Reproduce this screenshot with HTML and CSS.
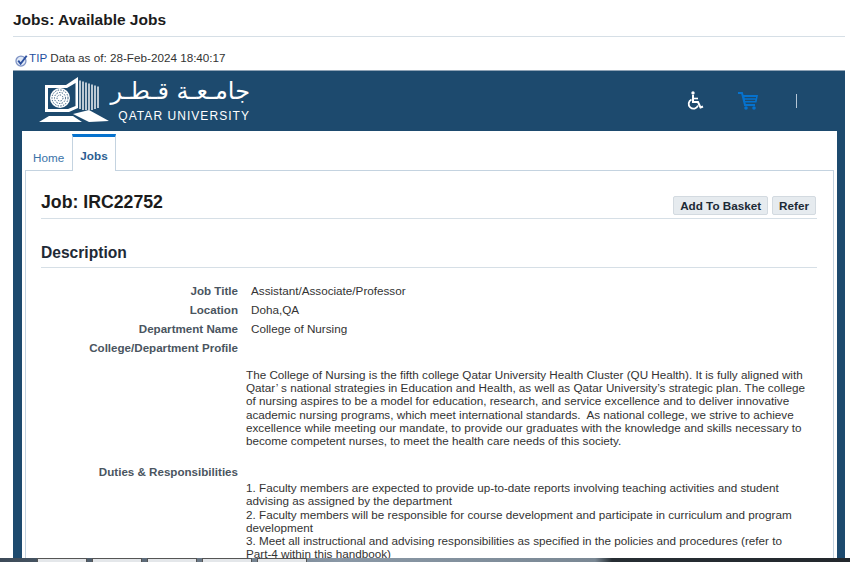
FILE: index.html
```html
<!DOCTYPE html>
<html lang="en">
<head>
<meta charset="utf-8">
<title>Jobs: Available Jobs</title>
<link rel="stylesheet" href="styles.css">
</head>
<body>
<div class="page">
  <h1 class="page-title">Jobs: Available Jobs</h1>
  <div class="tip">
    <svg class="tip-icon" width="13" height="13" viewBox="0 0 12 12"><circle cx="5.500" cy="6.500" r="4.600" fill="#dfe8f6" stroke="#7f93c4" stroke-width="1.200"/><path d="M3 6.200 5.200 9 10.800 1.600" fill="none" stroke="#2c4f9e" stroke-width="1.800"/></svg>
    <span class="tip-label">TIP</span> <span>Data as of: 28-Feb-2024 18:40:17</span>
  </div>
  <div class="shell">
    <header class="brand">
      <div class="logo">
        <svg class="logo-mark" width="70" height="46" viewBox="0 0 70 46">
          <path d="M6 8H27L39 0V31L30 35H6ZM9 11V32H29L36.500 29V6L28 11Z" fill="#fff" fill-rule="evenodd"/>
          <circle cx="21" cy="21" r="10" fill="#fff"/>
          <g fill="none" stroke="#1d4a6e" stroke-width=".9" stroke-dasharray="1.400 1.300"><circle cx="21" cy="21" r="8"/><circle cx="21" cy="21" r="5.500"/><circle cx="21" cy="21" r="3"/></g>
          <path d="M41 3.500V32M44 4.500V33M47 5.500V33M50 6.500V33M53 7.500V33M56 8.500V32M59 9.500V31" stroke="#fff" stroke-width="1.400"/>
          <path d="M0 45 10 39H34L43 45Z M34 37 50 33 70 44 50 45Z" fill="#fff"/>
        </svg>
        <div class="logo-text">
          <span class="logo-ar" lang="ar" dir="rtl">جامـعـة قـطـر</span>
          <span class="logo-en">QATAR UNIVERSITY</span>
        </div>
      </div>
      <div class="brand-tools">
        <svg class="tool-a11y" width="18" height="20" viewBox="0 0 18 20"><circle cx="6" cy="2" r="1.700" fill="#fff"/><path d="M6 4V11H11L13.500 16.500 16 15.500" fill="none" stroke="#fff" stroke-width="2"/><path d="M6.500 7.500H11" stroke="#fff" stroke-width="1.600"/><path d="M4.500 8.500A4.800 4.800 0 1 0 11 14.500" fill="none" stroke="#fff" stroke-width="1.800"/></svg>
        <svg class="tool-cart" width="21" height="18" viewBox="0 0 21 18"><path d="M0 1H4L7 13H17" fill="none" stroke="#0572ce" stroke-width="2"/><path d="M4.500 3H20L18.500 10.500H6.300ZM6.500 5V6.300H18V5ZM7 7.800V9H17.200V7.800Z" fill="#0572ce" fill-rule="evenodd"/><circle cx="8" cy="16" r="1.800" fill="#0572ce"/><circle cx="16" cy="16" r="1.800" fill="#0572ce"/></svg>
        <span class="tool-sep"></span>
      </div>
    </header>
    <main class="panel">
      <nav class="tabs">
        <a class="tab">Home</a>
        <a class="tab tab-active">Jobs</a>
      </nav>
      <section class="content">
        <div class="job-head">
          <h2 class="job-title">Job: IRC22752</h2>
          <div class="actions">
            <button class="btn">Add To Basket</button>
            <button class="btn">Refer</button>
          </div>
        </div>
        <h3 class="section-title">Description</h3>
        <div class="fields">
          <div class="label">Job Title</div><div class="value">Assistant/Associate/Professor</div>
          <div class="label">Location</div><div class="value">Doha,QA</div>
          <div class="label">Department Name</div><div class="value">College of Nursing</div>
          <div class="label">College/Department Profile</div><div class="value"></div>
        </div>
        <div class="long-text profile">The College of Nursing is the fifth college Qatar University Health Cluster (QU Health). It is fully aligned with<br>Qatar’ s national strategies in Education and Health, as well as Qatar University’s strategic plan. The college<br>of nursing aspires to be a model for education, research, and service excellence and to deliver innovative<br>academic nursing programs, which meet international standards.&nbsp; As national college, we strive to achieve<br>excellence while meeting our mandate, to provide our graduates with the knowledge and skills necessary to<br>become competent nurses, to meet the health care needs of this society.</div>
        <div class="fields duties-row">
          <div class="label">Duties &amp; Responsibilities</div><div class="value"></div>
        </div>
        <div class="long-text duties">1. Faculty members are expected to provide up-to-date reports involving teaching activities and student<br>advising as assigned by the department<br>2. Faculty members will be responsible for course development and participate in curriculum and program<br>development<br>3. Meet all instructional and advising responsibilities as specified in the policies and procedures (refer to<br>Part-4 within this handbook)</div>
      </section>
    </main>
  </div>
</div>
<div class="taskbar">
  <span class="task-item"></span><span class="task-item"></span><span class="task-item"></span><span class="task-item"></span><span class="task-item"></span>
</div>
</body>
</html>
```
FILE: styles.css
```css
* { box-sizing: border-box; }
html, body { margin: 0; height: 562px; overflow: hidden; background: #fff; }
body { font-family: "Liberation Sans", Arial, sans-serif; font-size: 11.700px; color: #333; }
.page { padding: 11px 5px 0 13px; height: 562px; overflow: hidden; }
.page-title { margin: 0; height: 26px; font-size: 15.500px; line-height: 17px; font-weight: bold; color: #1c1c1c; border-bottom: 1px solid #d6dfe6; }
.tip { margin-top: 13px; height: 20px; line-height: 16px; padding-left: 2px; display: flex; align-items: flex-start; gap: 1px; white-space: pre; }
.tip-icon { margin-top: 4px; flex: none; }
.tip-label { color: #1f4fa0; margin-right: 2px; }
.shell { background: #1d4a6e; border-top: 1px solid #8fa3b5; padding: 0 8px 0 9px; height: 600px; }
.brand { height: 60px; display: flex; justify-content: space-between; align-items: flex-start; }
.logo { display: flex; margin: 6px 0 0 17px; gap: 11px; }
.logo-mark { flex: none; }
.logo-text { display: flex; flex-direction: column; align-items: flex-end; color: #fff; width: 130px; }
.logo-ar { font-family: "DejaVu Sans", sans-serif; font-size: 24px; line-height: 28px; height: 33px; margin-top: 0; font-weight: normal; white-space: nowrap; }
.logo-en { font-size: 12px; line-height: 13px; letter-spacing: 1.050px; white-space: nowrap; font-weight: normal; }
.brand-tools { display: flex; align-items: center; margin: 20px 40px 0 0; }
.tool-a11y { margin-right: 33px; }
.tool-cart { margin-right: 37px; }
.tool-sep { width: 1px; height: 14px; background: #b5c6d6; }
.panel { background: #fff; padding: 3px 3px 0; height: 500px; }
.tabs { display: flex; height: 37px; align-items: flex-end; margin-bottom: -1px; }
.tab { display: block; color: #145c9e; }
.tabs .tab:first-child { width: 47px; padding: 0 0 5px 8px; line-height: 16px; color: #3a72a8; }
.tab-active { width: 44px; height: 37px; position: relative; background: #fff; border: 1px solid #c4d3e0; border-bottom: 0; border-top: 3px solid #0572ce; text-align: center; font-weight: bold; color: #2c5e92; line-height: 37px; z-index: 1; }
.content { border: 1px solid #c4d3e0; padding: 0 16px 0 15px; height: 480px; }
.job-head { height: 48px; display: flex; justify-content: space-between; align-items: flex-end; border-bottom: 1px solid #d6dfe6; padding-bottom: 3px; }
.job-title { margin: 0 0 3px; font-size: 17.700px; line-height: 20px; color: #1c1c1c; font-weight: bold; }
.actions { display: flex; gap: 4px; margin-right: 1px; }
.btn { height: 19px; padding: 0 6px; margin: 0; font: bold 11.700px/17px "Liberation Sans", Arial, sans-serif; color: #1c2a36; background: #e6ebef; border: 1px solid #d3dae0; border-radius: 2px; }
.section-title { margin: 0; height: 49px; padding-top: 25px; font-size: 15.600px; line-height: 18px; font-weight: bold; color: #1f2a36; border-bottom: 1px solid #d6dfe6; }
.fields { display: grid; grid-template-columns: 197px 1fr; column-gap: 13px; margin-top: 13px; grid-auto-rows: 19px; line-height: 19px; }
.label { text-align: right; font-weight: bold; color: #4a5560; font-size: 11.600px; }
.value { color: #333; }
.long-text { margin-left: 205px; line-height: 13.200px; color: #333; white-space: nowrap; }
.profile { margin-top: 11px; }
.duties-row { margin-top: 15px; }
.duties { margin-top: 0; }
.taskbar { position: fixed; left: 0; right: 0; bottom: 0; height: 4px; background: linear-gradient(90deg, #3c4a58 0%, #8a98a6 40%, #7a8894 70%, #262d33 72%, #23282d 100%); display: flex; gap: 5px; padding-left: 37px; }
.task-item { width: 50px; height: 4px; background: #e4e7ea; border: 1px solid #555; border-bottom: 0; }
```
